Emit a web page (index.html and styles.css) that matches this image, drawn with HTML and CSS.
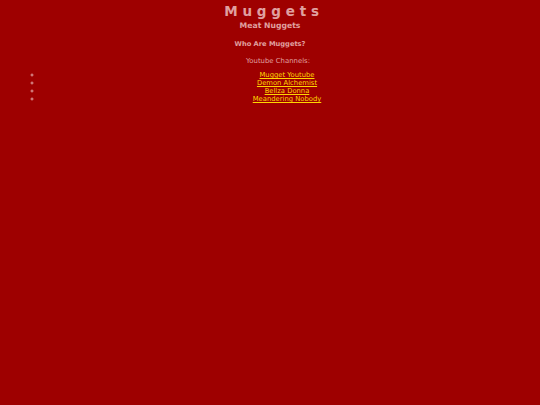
FILE: index.html
```html
<!DOCTYPE html>
<html>
<head>
<meta charset="utf-8">
<link rel="stylesheet" href="styles.css">
</head>
<body>
<h1 class="title">Muggets</h1>
<h2 class="subtitle">Meat Nuggets</h2>
<h3 class="who">Who Are Muggets?</h3>
<p class="channels">Youtube Channels:</p>
<ul class="links">
<li><a href="#">Mugget Youtube</a></li>
<li><a href="#">Demon Alchemist</a></li>
<li><a href="#">Bellza Donna</a></li>
<li><a href="#">Meandering Nobody</a></li>
</ul>
</body>
</html>
```
FILE: styles.css
```css
html, body {
  background: #9e0000;
}
body {
  margin: 0;
  padding: 2px 8px;
  font-family: "DejaVu Sans", sans-serif;
  color: #e0a0a0;
  text-align: center;
}
.title {
  font-size: 13.5px;
  letter-spacing: 4.8px;
  margin: 0;
  padding-left: 8px;
  line-height: 18px;
  font-weight: bold;
}
.subtitle {
  font-size: 7.7px;
  margin: 0;
  line-height: 12px;
  font-weight: bold;
}
.who {
  font-size: 6.7px;
  margin: 6px 0 0;
  line-height: 12px;
  font-weight: bold;
}
.channels {
  font-size: 6.9px;
  margin: 6px 0 0;
  padding-left: 16px;
  line-height: 10px;
}
.links {
  list-style: circle;
  margin: 5px 0 0;
  padding-left: 34px;
  font-size: 6.8px;
  line-height: 8px;
}
.links a {
  color: #ffd700;
}
```
